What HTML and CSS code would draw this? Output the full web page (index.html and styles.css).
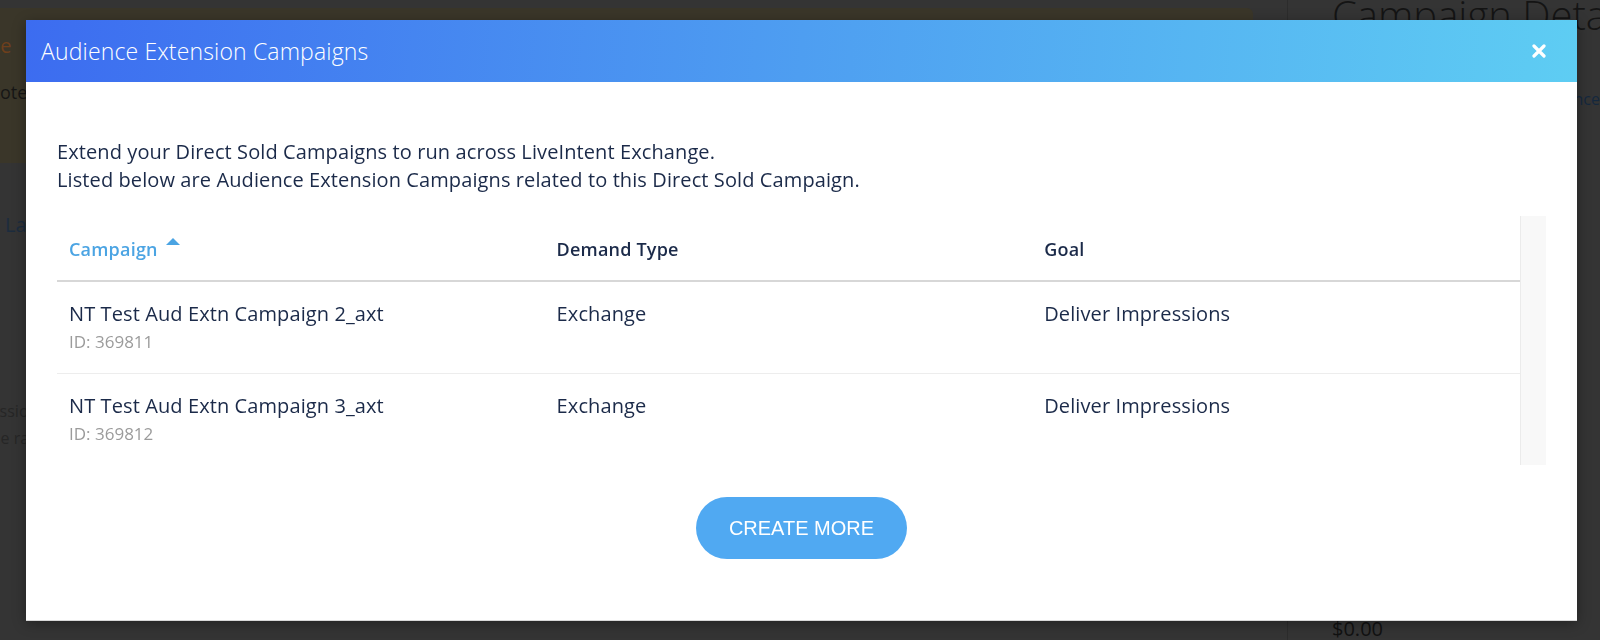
FILE: index.html
```html
<!DOCTYPE html>
<html>
	<head>
		<meta charset="utf-8">
		<title>Audience Extension Campaigns</title>
		<link rel="stylesheet" href="styles.css">
	</head>
	<body>

		<!-- page behind the dialog -->
		<div class='page'>
			<div class='main'>
				<div class='notice'>
					<div class='notice-title'>Note</div>
					<div class='notice-text'>Quote</div>
				</div>
				<div class='tabs'>Labels</div>
				<div class='summary'>
					<div class='summary-line'>Impressions</div>
					<div class='summary-line second'>the rate</div>
				</div>
			</div>
			<div class='side'>
				<h1 class='side-title'>Campaign Details</h1>
				<div class='side-link'>Audience</div>
				<div class='side-price'>$0.00</div>
			</div>
		</div>

		<div class='overlay'>
			<div class='modal'>
				<div class='modal-header'>
					<h2 class='modal-title'>Audience Extension Campaigns</h2>
					<button class='modal-close' type='button' aria-label='Close'>
						<svg width="14" height="14" viewBox="0 0 14 14"><path d="M2 2L12 12M12 2L2 12" stroke="#fff" stroke-width="3.2" stroke-linecap="round" fill="none"/></svg>
					</button>
				</div>

				<div class='modal-body'>
					<p class='intro'>
						Extend your Direct Sold Campaigns to run across LiveIntent Exchange.<br/>
						Listed below are Audience Extension Campaigns related to this Direct Sold Campaign.
					</p>

					<div class='table-wrap'>
						<table class='campaigns'>
							<colgroup>
								<col class='col-third'>
								<col class='col-third'>
								<col>
							</colgroup>
							<thead>
								<tr>
									<th class='sorted'>Campaign<span class='sort-arrow'></span></th>
									<th>Demand Type</th>
									<th>Goal</th>
								</tr>
							</thead>
							<tbody>
								<tr>
									<td>
										<div>NT Test Aud Extn Campaign 2_axt</div>
										<div class='camp-id'>ID: 369811</div>
									</td>
									<td>Exchange</td>
									<td>Deliver Impressions</td>
								</tr>
								<tr>
									<td>
										<div>NT Test Aud Extn Campaign 3_axt</div>
										<div class='camp-id'>ID: 369812</div>
									</td>
									<td>Exchange</td>
									<td>Deliver Impressions</td>
								</tr>
							</tbody>
						</table>
						<div class='scroll-track'></div>
					</div>

					<div class='actions'>
						<button class='btn-create' type='button'>CREATE MORE</button>
					</div>
				</div>
			</div>
		</div>

	</body>
</html>
```

FILE: styles.css
```css
body {
	margin: 0;
	height: 640px;
	overflow: hidden;
	background: #343434;
	font-family: "Open Sans", "Liberation Sans", sans-serif;
}

/* dimmed page behind the dialog */

div.page {
	display: flex;
	height: 640px;
}

div.main {
	flex: none;
	width: 1288px;
	padding-top: 8px;
	box-sizing: border-box;
	border-right: 1px solid #2c2c2c;
}

div.notice {
	width: 1287px;
	height: 155px;
	margin-left: -34px;
	padding-top: 24px;
	box-sizing: border-box;
	background: #3a3629;
	border-radius: 6px;
	font-size: 20px;
}

div.notice-title {
	color: #6e3f1c;
	line-height: 28px;
}

div.notice-text {
	margin-top: 20px;
	margin-left: 9px;
	color: #161616;
	font-size: 18px;
}

div.tabs {
	margin-top: 48px;
	margin-left: 5px;
	color: #1c2c3e;
	font-size: 20px;
}

div.summary {
	margin-top: 160px;
	margin-left: -45px;
	color: #262626;
	font-size: 16px;
	line-height: 27px;
}

div.summary-line.second {
	margin-left: 30px;
}

div.side {
	flex: 1;
	min-width: 0;
	overflow: hidden;
	display: flex;
	flex-direction: column;
	padding-left: 44px;
}

h1.side-title {
	margin: -13px 0 0 0;
	font-size: 40px;
	font-weight: 300;
	color: #141414;
	white-space: nowrap;
}

div.side-link {
	margin-top: 46px;
	text-align: right;
	color: #14283e;
	font-size: 16px;
	white-space: nowrap;
}

div.side-price {
	margin-top: auto;
	margin-bottom: -2px;
	color: #111;
	font-size: 20px;
}

/* dialog */

div.overlay {
	position: fixed;
	top: 0;
	left: 0;
	right: 0;
	bottom: 0;
	padding: 20px 23px 20px 26px;
	box-sizing: border-box;
}

div.modal {
	width: 1551px;
	height: 600px;
	background: #fff;
	display: flex;
	flex-direction: column;
	box-shadow: 0 1px 0 #d8d8d8, 0 3px 12px rgba(0, 0, 0, 0.35);
}

div.modal-header {
	height: 62px;
	flex: none;
	display: flex;
	align-items: center;
	justify-content: space-between;
	padding: 0 31px 0 15px;
	background: linear-gradient(95deg, #3c6cf0 0%, #4e9ef1 50%, #5ecdf3 100%);
}

h2.modal-title {
	margin: 0;
	color: #fff;
	font-size: 23px;
	font-weight: 300;
	line-height: 30px;
	letter-spacing: 0.15px;
}

button.modal-close {
	width: 14px;
	height: 14px;
	padding: 0;
	border: none;
	background: none;
	display: flex;
	cursor: pointer;
}

div.modal-body {
	padding: 56px 31px 0 31px;
}

p.intro {
	margin: 0;
	color: #1b2a49;
	font-size: 20px;
	line-height: 28px;
	letter-spacing: 0.1px;
}

div.table-wrap {
	display: flex;
	margin-top: 22px;
}

table.campaigns {
	flex: 1;
	width: 100%;
	table-layout: fixed;
	border-collapse: collapse;
	color: #1b2a49;
}

col.col-third {
	width: 33.33%;
}

table.campaigns th {
	text-align: left;
	font-size: 18px;
	font-weight: 600;
	line-height: 24px;
	letter-spacing: 0.2px;
	padding: 21px 12px 19px 12px;
	border-bottom: 2px solid #d7d7d7;
}

table.campaigns th.sorted {
	color: #4ba4e3;
}

span.sort-arrow {
	display: inline-block;
	width: 0;
	height: 0;
	margin: 1px 0 0 8px;
	vertical-align: text-top;
	border-left: 7px solid transparent;
	border-right: 7px solid transparent;
	border-bottom: 7px solid #4ba4e3;
}

table.campaigns td {
	vertical-align: top;
	font-size: 20px;
	line-height: 28px;
	letter-spacing: 0.1px;
	padding: 18px 12px 19px 12px;
	border-bottom: 1px solid #ededed;
}

table.campaigns tbody tr:last-child td {
	border-bottom: none;
}

div.camp-id {
	margin-top: 2px;
	color: #9b9b9b;
	font-size: 17px;
	line-height: 24px;
	letter-spacing: 0;
}

div.scroll-track {
	flex: none;
	width: 25px;
	background: #f8f8f8;
	border-left: 1px solid #ebebeb;
}

div.actions {
	display: flex;
	justify-content: center;
	padding-top: 32px;
}

button.btn-create {
	width: 211px;
	height: 62px;
	border: none;
	border-radius: 31px;
	background: #50a9f2;
	color: #fff;
	font-family: "Liberation Sans", Arial, sans-serif;
	font-size: 20px;
	cursor: pointer;
}
```
